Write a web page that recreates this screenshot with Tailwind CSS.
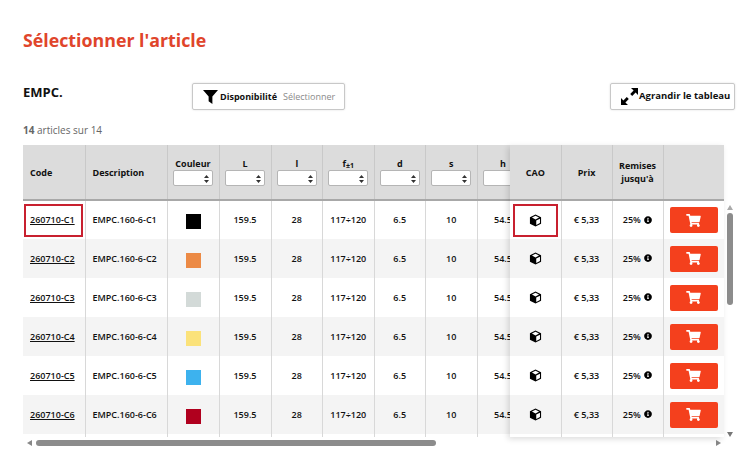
<!DOCTYPE html>
<html lang="fr">
<head>
  <meta charset="UTF-8" />
  <meta name="viewport" content="width=device-width, initial-scale=1.0" />
  <title>Sélectionner l'article</title>
  <script src="https://cdn.jsdelivr.net/npm/@tailwindcss/browser@4"></script>
</head>
<body class="bg-white text-[#111] font-['Open_Sans',sans-serif] w-[752px] h-[467px] overflow-hidden">

  <div class="px-[23px] pt-[28px]">
    <h1 class="text-[17.8px] leading-[24px] font-bold text-[#e0452b]">Sélectionner l'article</h1>

    <!-- Barre d'outils -->
    <div class="flex items-start mt-[31px] h-[28px] w-[712px]">
      <div class="w-[169px] text-[13px] leading-[18px] font-bold">EMPC.</div>
      <button class="flex items-center w-[153px] h-[27px] border border-[#c8c8c8] rounded-[2px] shadow-[0_0_2px_rgba(0,0,0,0.15)] pl-[10px]">
        <svg class="w-[15px] h-[15px] mr-[2px]" viewBox="0 0 16 16"><path fill="#000" d="M0 1h16L10 8v8L6 13V8z"/></svg>
        <span class="text-[9px] font-bold">Disponibilité</span>
        <span class="text-[9px] text-[#8a8a8a] ml-[6px]">Sélectionner</span>
      </button>
      <button class="flex items-center w-[125px] h-[27px] ml-auto border border-[#c8c8c8] rounded-[2px] shadow-[0_0_2px_rgba(0,0,0,0.15)] pl-[10px]">
        <svg class="w-[17px] h-[17px] mr-[1px]" viewBox="0 0 17 17"><path fill="#000" d="M10 0h7v7l-2.4-2.4-3.4 3.4-2-2 3.4-3.4zM0 17v-7l2.4 2.4 3.4-3.4 2 2-3.4 3.4L7 17z"/></svg>
        <span class="text-[9.5px] font-bold">Agrandir le tableau</span>
      </button>
    </div>

    <p class="mt-[12px] text-[10px] leading-[14px] text-[#666]"><b class="font-bold">14</b> articles sur 14</p>

    <!-- Tableau -->
    <div class="relative mt-[8px] w-[712px]">
      <div class="flex w-[701px] h-[292px]">
        <div class="w-[487px] shrink-0 overflow-hidden">
          <table class="table-fixed border-collapse w-[505px]">
            <thead id="tete"></thead>
            <tbody id="lignes"></tbody>
          </table>
        </div>
        <div class="w-[214px] h-[292px] shrink-0 shadow-[-2px_2px_6px_rgba(0,0,0,0.14)] z-10 bg-white">
          <table class="table-fixed border-collapse w-[214px]">
            <thead id="teteFixe"></thead>
            <tbody id="lignesFixes"></tbody>
          </table>
        </div>
      </div>

      <!-- Ascenseur vertical -->
      <div class="absolute left-[703px] top-[60px] w-[8px] h-[232px] flex flex-col items-center">
        <svg class="w-[6px] h-[5px]" viewBox="0 0 6 5"><path fill="#aaa" d="M3 0l3 5H0z"/></svg>
        <div class="w-[6px] h-[92px] mt-[3px] rounded-[3px] bg-[#8c8c8c]"></div>
        <svg class="w-[6px] h-[5px] mt-auto" viewBox="0 0 6 5"><path fill="#777" d="M0 0h6L3 5z"/></svg>
      </div>

      <!-- Ascenseur horizontal -->
      <div class="flex items-center h-[6px] w-[701px] mt-[3px] pl-[4px] pr-[3px]">
        <svg class="w-[5px] h-[6px]" viewBox="0 0 5 6"><path fill="#888" d="M5 0v6L0 3z"/></svg>
        <div class="w-[400px] h-[6px] ml-[4px] rounded-[3px] bg-[#8c8c8c]"></div>
        <svg class="w-[5px] h-[6px] ml-auto" viewBox="0 0 5 6"><path fill="#888" d="M0 0l5 3-5 3z"/></svg>
      </div>
    </div>
  </div>

  <script>
    const couleurs = ["#000000", "#ec8a45", "#d3dad8", "#fbe27a", "#3db2ee", "#b0001e"];
    const colonnes = ["L", "l", "f", "d", "s", "h"];
    const largeurs = [52, 51.5, 51.5, 51.5, 51.5, 52];
    const valeurs = ["159.5", "28", "117÷120", "6.5", "10", "54.5"];

    const fleches = `<svg class="absolute right-[3px] top-[4px] w-[5px] h-[8px]" viewBox="0 0 5 8"><path fill="#333" d="M2.5 0L5 3H0zM2.5 8L0 5h5z"/></svg>`;
    const filtre = `<div class="relative mx-auto w-[40px] h-[16px] bg-white border border-[#b5b5b5] rounded-[2px]">${fleches}</div>`;

    const th = "bg-[#dcdcdc] border-r border-[#c9c9c9] border-b-[2px] border-b-[#a8a8a8] h-[55px] p-0 text-[9px] leading-[13px] font-bold";
    const thFiltre = "bg-[#dcdcdc] border-r border-[#c9c9c9] border-b-[2px] border-b-[#a8a8a8] h-[55px] p-0 pb-[1px] text-[9px] leading-[12px] font-bold";
    const td = "border-r border-[#d8d8d8] h-[39px] p-0 text-center text-[9px] font-semibold";
    const fin = "border-r border-[#d8d8d8] h-[3px] p-0";

    const cube = `<svg class="w-[13px] h-[13px] mx-auto" viewBox="0 0 14 14"><path fill="#000" d="M7 .5L13 3.5V10.5L7 13.5 1 10.5V3.5z"/><path fill="#fff" d="M7 2L10.8 3.9 7 5.8 3.2 3.9zM7.8 7.1L11.8 5.1V9.8L7.8 11.8z"/></svg>`;
    const info = `<svg class="inline w-[8px] h-[8px] ml-[1px] align-[-0.5px]" viewBox="0 0 512 512"><path fill="#000" d="M256 8C119 8 8 119 8 256s111 248 248 248 248-111 248-248S393 8 256 8zm0 110a42 42 0 1 1 0 84 42 42 0 0 1 0-84zm56 254c0 7-5 12-12 12h-88c-7 0-12-5-12-12v-24c0-7 5-12 12-12h12v-64h-12c-7 0-12-5-12-12v-24c0-7 5-12 12-12h64c7 0 12 5 12 12v100h12c7 0 12 5 12 12z"/></svg>`;
    const panier = `<svg class="w-[15px] h-[13px]" viewBox="0 0 576 512"><path fill="#fff" d="M528 301l47-208c4-15-8-29-23-29H159l-9-45C148 8 138 0 127 0H24C11 0 0 11 0 24v16c0 13 11 24 24 24h70l70 343c-17 10-28 28-28 49 0 31 25 56 56 56s56-25 56-56c0-16-6-30-17-40h210c-11 10-17 24-17 40 0 31 25 56 56 56s56-25 56-56c0-22-13-41-32-50l6-25c3-15-8-29-24-29H218l-6-32h293c11 0 21-8 23-19z"/></svg>`;

    let tete = `<tr>
      <th class="${th} w-[62px] text-left pl-[7px]">Code</th>
      <th class="${th} w-[82px] text-left pl-[7px]">Description</th>
      <th class="${thFiltre} w-[52px]">Couleur${filtre}</th>`;
    colonnes.forEach((c, i) => {
      const libelle = c === "f" ? `f<sub class="text-[7px] leading-none">±1</sub>` : c;
      tete += `<th class="${thFiltre}" style="width:${largeurs[i]}px">${libelle}${filtre}</th>`;
    });
    document.getElementById("tete").innerHTML = tete + "</tr>";

    document.getElementById("teteFixe").innerHTML = `<tr>
      <th class="${th} w-[51px]">CAO</th>
      <th class="${th} w-[51px]">Prix</th>
      <th class="${th} w-[51px]">Remises<br>jusqu'à</th>
      <th class="${th} w-[61px] border-r-0"></th>
    </tr>`;

    let lignes = "";
    let lignesFixes = "";
    couleurs.forEach((couleur, i) => {
      const n = i + 1;
      const fond = i % 2 ? "bg-[#f4f4f4]" : "bg-white";
      const cadre = i === 0 ? "border-[2px] border-[#c8202f]" : "border-[2px] border-transparent";
      lignes += `<tr class="${fond}">
        <td class="${td} text-left"><a href="#" class="flex items-center h-[33px] w-[59px] ml-[1px] pl-[4px] underline ${cadre}">260710-C${n}</a></td>
        <td class="${td} text-left pl-[7px]">EMPC.160-6-C${n}</td>
        <td class="${td}"><div class="w-[15px] h-[15px] mx-auto mt-[3px]" style="background:${couleur}"></div></td>`;
      valeurs.forEach(v => { lignes += `<td class="${td}">${v}</td>`; });
      lignes += "</tr>";

      lignesFixes += `<tr class="${fond}">
        <td class="${td}"><div class="flex items-center h-[33px] w-[45px] mx-auto ${cadre}">${cube}</div></td>
        <td class="${td} text-[9.5px] font-bold">€ 5,33</td>
        <td class="${td}">25% ${info}</td>
        <td class="${td} border-r-0"><div class="flex items-center justify-center w-[48px] h-[26px] mx-auto bg-[#f4401d] rounded-[2px]">${panier}</div></td>
      </tr>`;
    });
    // les filets verticaux descendent un peu sous la derniere ligne
    let finGauche = "<tr>";
    for (let i = 0; i < 9; i++) finGauche += `<td class="${fin}"></td>`;
    let finDroite = "<tr>";
    for (let i = 0; i < 3; i++) finDroite += `<td class="${fin}"></td>`;

    document.getElementById("lignes").innerHTML = lignes + finGauche + "</tr>";
    document.getElementById("lignesFixes").innerHTML = lignesFixes + finDroite + `<td class="h-[3px] p-0"></td></tr>`;
  </script>
</body>
</html>
